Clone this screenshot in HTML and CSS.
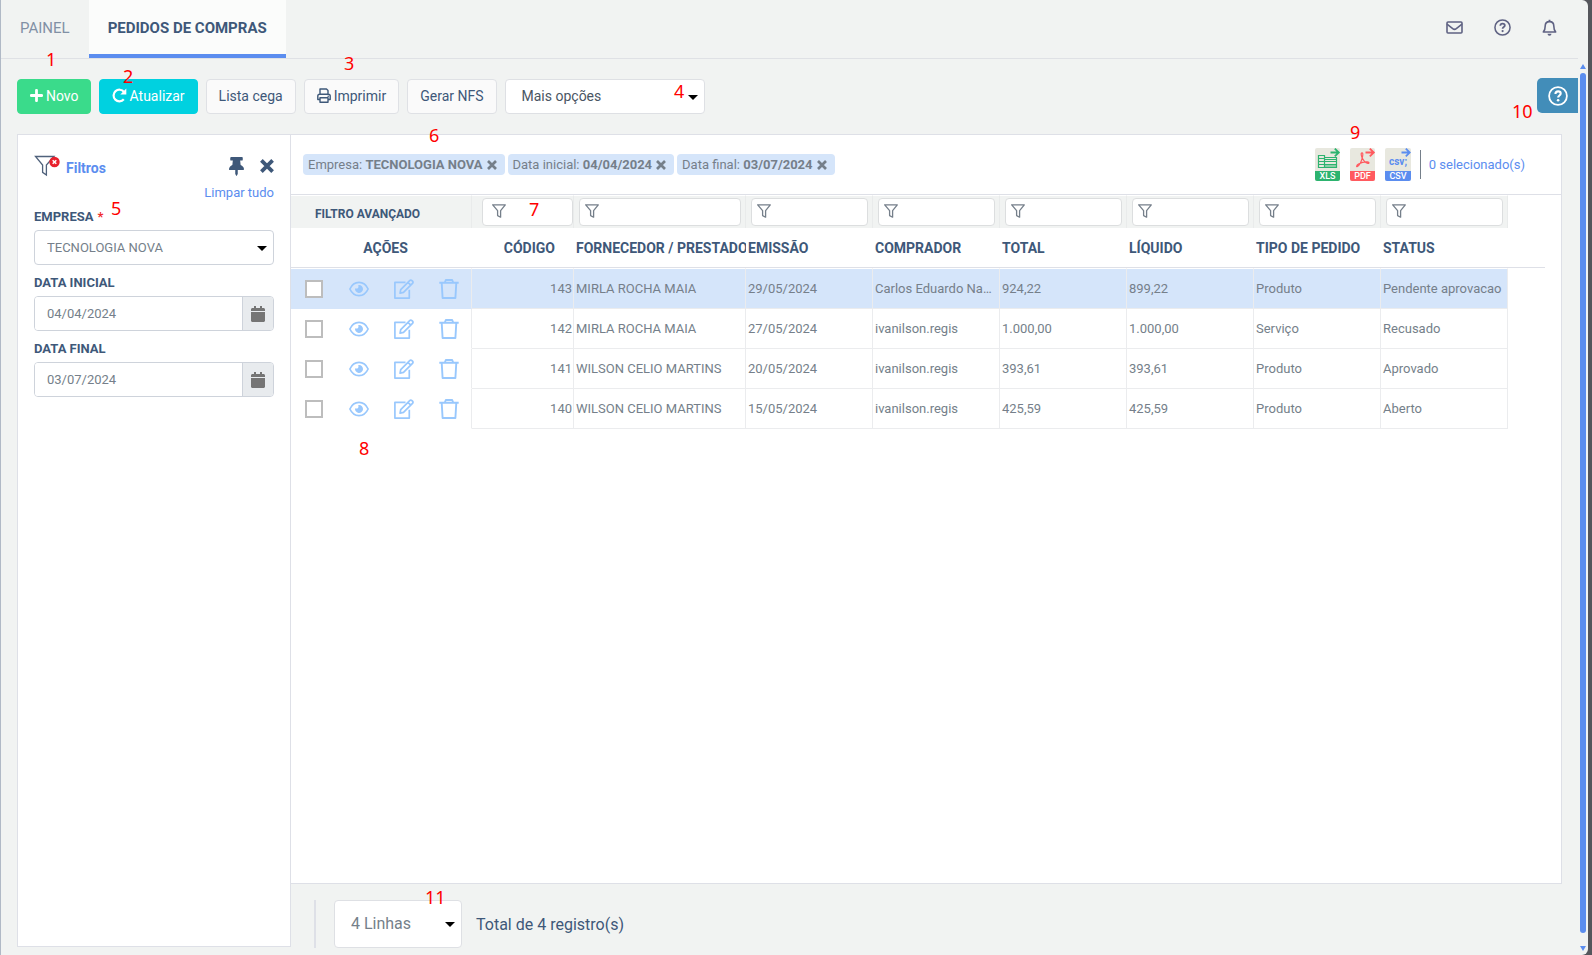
FILE: index.html
```html
<!DOCTYPE html>
<html lang="pt-BR">
<head>
<meta charset="utf-8">
<title>Pedidos de Compras</title>
<link rel="stylesheet" href="styles.css">
</head>
<body>
<svg class="sprite" aria-hidden="true">
  <symbol id="funnel" viewBox="0 0 14 14"><path d="M.7.8h12.6L8.600 6.600v6.600l-3-1.600v-5z" fill="none" stroke="currentColor" stroke-width="1.300" stroke-linejoin="round"/></symbol>
  <symbol id="cross" viewBox="0 0 12 12"><path d="M1.200 1.200l9.600 9.600M10.800 1.200l-9.600 9.600" fill="none" stroke="currentColor" stroke-width="3.200"/></symbol>
  <symbol id="help" viewBox="0 0 20 20"><circle cx="10" cy="10" r="8.900" fill="none" stroke="currentColor" stroke-width="1.800"/><path d="M7.400 8c.1-1.700 1.200-2.600 2.700-2.600s2.600.9 2.600 2.200c0 1.900-2.600 1.900-2.600 4" fill="none" stroke="currentColor" stroke-width="2.100"/><circle cx="10.100" cy="14.200" r="1.300" fill="currentColor"/></symbol>
  <symbol id="calendar" viewBox="0 0 448 512"><path fill="currentColor" d="M12 192h424c6.600 0 12 5.400 12 12v260c0 26.500-21.500 48-48 48H48c-26.500 0-48-21.500-48-48V204c0-6.600 5.400-12 12-12zm436-44v-36c0-26.500-21.500-48-48-48h-48V12c0-6.600-5.400-12-12-12h-40c-6.600 0-12 5.400-12 12v52H160V12c0-6.600-5.400-12-12-12h-40c-6.600 0-12 5.400-12 12v52H48C21.500 64 0 85.500 0 112v36c0 6.600 5.400 12 12 12h424c6.600 0 12-5.400 12-12z"/></symbol>
  <symbol id="eye" viewBox="0 0 20 20"><path d="M.9 10C2.600 6.200 6 3.400 10 3.400s7.400 2.800 9.100 6.600c-1.700 3.800-5.100 6.600-9.100 6.600S2.600 13.800.9 10z" fill="none" stroke="currentColor" stroke-width="1.700"/><path d="M10 6a4 4 0 1 1-3.900 3.200c.8.500 1.900.6 2.700 0 .9-.8.800-2.100.4-3.100z" fill="currentColor"/></symbol>
  <symbol id="edit" viewBox="0 0 20 20"><g fill="none" stroke="currentColor" stroke-width="1.700" stroke-linejoin="round"><path d="M11.500 3.300H.9v15.800h14.400v-8.400"/><path d="M6.700 10.600L15.700 1.600c.7-.7 1.500-.7 2.200 0l.6.600c.7.700.7 1.500 0 2.200l-9 9-3.400.8zM14 3.300l2.800 2.800"/></g></symbol>
  <symbol id="trash" viewBox="0 0 20 20"><g fill="none" stroke="currentColor" stroke-width="1.900" stroke-linejoin="round"><path d="M.3 3.700h19.400M5.800 3.500l1-2.500h6.400l1 2.500M2.700 3.700l.9 15.300h12.800l.9-15.300"/></g></symbol>
</svg>

<div class="app">
  <div class="view">
    <header class="topbar">
      <nav class="tabs">
        <a class="tab" href="#painel">PAINEL</a>
        <a class="tab tab-active" href="#pedidos">PEDIDOS DE COMPRAS</a>
      </nav>
      <div class="top-actions">
        <button class="icon-btn" aria-label="Mensagens"><svg width="17" height="17" viewBox="0 0 17 17"><g fill="none" stroke="currentColor" stroke-width="1.600"><rect x="1" y="3" width="15" height="11" rx="1"/><path d="M1 5.200l5.700 4.500c1.200.9 2.400.9 3.600 0L16 5.200"/></g></svg></button>
        <button class="icon-btn" aria-label="Ajuda"><svg width="17" height="17"><use href="#help"/></svg></button>
        <button class="icon-btn" aria-label="Notificações"><svg width="15" height="17" viewBox="0 0 15 17"><path d="M1.300 13c1.500-1.600 1.900-2.800 1.900-6 0-2.500 1.700-4.400 4.300-4.400s4.300 1.900 4.300 4.400c0 3.200.4 4.400 1.900 6z" fill="none" stroke="currentColor" stroke-width="1.600" stroke-linejoin="round"/><path d="M6.600.8h1.800v2H6.600zM5.500 14.700h4a2 2 0 0 1-4 0z" fill="currentColor"/></svg></button>
      </div>
    </header>

    <div class="toolbar">
      <button class="btn btn-green"><svg width="13" height="13" viewBox="0 0 13 13"><path d="M6.500 1.300v10.400M1.300 6.500h10.400" stroke="currentColor" stroke-width="2.800" stroke-linecap="round"/></svg>Novo</button>
      <button class="btn btn-cyan"><svg width="15" height="15" viewBox="0 0 15 15"><path d="M11.800 11.300A5.800 5.800 0 1 1 12 4" fill="none" stroke="currentColor" stroke-width="2.200"/><path d="M14.300.6v6H8.300z" fill="currentColor"/></svg>Atualizar</button>
      <button class="btn">Lista cega</button>
      <button class="btn"><svg width="14" height="15" viewBox="0 0 14 15"><g fill="none" stroke="currentColor" stroke-width="1.400" stroke-linejoin="round"><path d="M3 6.200V1h6.500L11 2.500v3.700M3 11.500H.8V8c0-1.200.6-1.800 1.800-1.800h8.800c1.200 0 1.800.6 1.800 1.800v3.500H11"/><path d="M3 9.800h8v4.400H3z"/></g><circle cx="11.200" cy="8.200" r=".8" fill="currentColor"/></svg>Imprimir</button>
      <button class="btn">Gerar NFS</button>
      <div class="select select-more"><select aria-label="Mais opções"><option>Mais opções</option></select></div>
    </div>
    <button class="help-tab" aria-label="Ajuda da tela"><svg width="20" height="20"><use href="#help"/></svg></button>

    <div class="workspace">
      <aside class="filters">
        <div class="filters-head">
          <svg width="26" height="22" viewBox="0 0 26 22"><path d="M1.500 1.500h18.500l-7.600 8.500v10l-3.800-2.600V10z" fill="#fff" stroke="#50627c" stroke-width="1.300"/><circle cx="20.500" cy="7" r="5.200" fill="#e8202c"/><path d="M18.700 5.200l3.600 3.600M22.300 5.200l-3.600 3.600" stroke="#fff" stroke-width="1.500"/></svg>
          <h2>Filtros</h2>
          <button class="icon-btn dark" aria-label="Fixar"><svg width="15" height="19" viewBox="0 0 384 512" preserveAspectRatio="none"><path fill="currentColor" d="M298.028 214.267L285.793 96H328c13.255 0 24-10.745 24-24V24c0-13.255-10.745-24-24-24H56C42.745 0 32 10.745 32 24v48c0 13.255 10.745 24 24 24h42.207L85.972 214.267C37.465 236.820 0 277.261 0 328c0 13.255 10.745 24 24 24h136v104.007c0 1.242.289 2.467.845 3.578l24 48c2.941 5.882 11.364 5.893 14.311 0l24-48a8.008 8.008 0 0 0 .845-3.578V352h136c13.255 0 24-10.745 24-24-.001-51.183-37.983-91.420-85.973-113.733z"/></svg></button>
          <button class="icon-btn dark" aria-label="Fechar"><svg width="14" height="14"><use href="#cross"/></svg></button>
        </div>
        <a class="clear" href="#limpar">Limpar tudo</a>
        <label class="lbl" for="empresa">EMPRESA <span class="req">*</span></label>
        <div class="select select-field"><select id="empresa"><option>TECNOLOGIA NOVA</option></select></div>
        <label class="lbl" for="dini">DATA INICIAL</label>
        <div class="date"><input id="dini" type="text" value="04/04/2024"><button aria-label="Abrir calendário inicial"><svg width="14" height="16"><use href="#calendar"/></svg></button></div>
        <label class="lbl" for="dfim">DATA FINAL</label>
        <div class="date"><input id="dfim" type="text" value="03/07/2024"><button aria-label="Abrir calendário final"><svg width="14" height="16"><use href="#calendar"/></svg></button></div>
      </aside>

      <main class="main">
        <section class="panel">
          <div class="panel-head">
            <div class="chips">
              <span class="chip">Empresa: <b>TECNOLOGIA NOVA</b><button aria-label="Remover empresa"><svg width="10" height="10"><use href="#cross"/></svg></button></span>
              <span class="chip">Data inicial: <b>04/04/2024</b><button aria-label="Remover data inicial"><svg width="10" height="10"><use href="#cross"/></svg></button></span>
              <span class="chip">Data final: <b>03/07/2024</b><button aria-label="Remover data final"><svg width="10" height="10"><use href="#cross"/></svg></button></span>
            </div>
            <div class="exports">
              <button aria-label="Exportar XLS"><svg width="26" height="33" viewBox="0 0 26 33"><rect width="25" height="33" rx="2" fill="#e8e8df"/><path d="M0 23h25v8a2 2 0 0 1-2 2H2a2 2 0 0 1-2-2z" fill="#2db36f"/><g fill="none" stroke="#2db36f"><path d="M3.500 7.500h6v12h-6zM9.500 9.500h12v10h-12M3.500 10.500h6M3.500 13.500h18M3.500 16.500h18M9.500 11.500h12M9.500 18h12" stroke-width="1.200"/><path d="M15.500 4.500h8M19.800.6l4 3.900-4 3.900" stroke-width="1.800"/></g><text x="12.500" y="31" class="ico-text">XLS</text></svg></button>
              <button aria-label="Exportar PDF"><svg width="26" height="33" viewBox="0 0 26 33"><rect width="25" height="33" rx="2" fill="#e8e8df"/><path d="M0 23h25v8a2 2 0 0 1-2 2H2a2 2 0 0 1-2-2z" fill="#ff5a5f"/><g fill="none" stroke="#ff5a5f"><path d="M12.500 5c-1.600-.5-1.700 1.600-.6 4.200 1.300 3 3.800 5.600 6 6.200 1.500.3 1.600-1.300-.4-1.500-3-.2-6.500.8-9 2.200-2.200 1.200-2.300 3.200-1.200 2.500 1.800-1.200 4.300-5.800 5.200-9.800.3-1.500.5-3.500 0-3.800z" stroke-width="1.200"/><path d="M15.500 4.500h8M19.800.6l4 3.900-4 3.900" stroke-width="1.800"/></g><text x="12.500" y="31" class="ico-text">PDF</text></svg></button>
              <button aria-label="Exportar CSV"><svg width="26" height="33" viewBox="0 0 26 33"><rect width="26" height="33" rx="2" fill="#e8e8df"/><path d="M0 23h26v8a2 2 0 0 1-2 2H2a2 2 0 0 1-2-2z" fill="#5b8def"/><path d="M16.500 4.500h8M20.800.6l4 3.900-4 3.900" fill="none" stroke="#5b8def" stroke-width="1.800"/><text x="13" y="17" class="ico-text ico-csv">csv;</text><text x="13" y="31" class="ico-text">CSV</text></svg></button>
              <span class="selected">0 selecionado(s)</span>
            </div>
          </div>

          <table class="grid">
            <colgroup><col class="c-act"><col class="c-cod"><col class="c-for"><col class="c-n"><col class="c-n"><col class="c-n"><col class="c-n"><col class="c-n"><col class="c-n"><col></colgroup>
            <thead>
              <tr class="filter-row">
                <td class="adv">FILTRO AVANÇADO</td>
                <td class="first"><label class="search"><svg width="14" height="14"><use href="#funnel"/></svg><input type="text" aria-label="Filtrar código"></label></td>
                <td><label class="search"><svg width="14" height="14"><use href="#funnel"/></svg><input type="text" aria-label="Filtrar fornecedor"></label></td>
                <td><label class="search"><svg width="14" height="14"><use href="#funnel"/></svg><input type="text" aria-label="Filtrar emissão"></label></td>
                <td><label class="search"><svg width="14" height="14"><use href="#funnel"/></svg><input type="text" aria-label="Filtrar comprador"></label></td>
                <td><label class="search"><svg width="14" height="14"><use href="#funnel"/></svg><input type="text" aria-label="Filtrar total"></label></td>
                <td><label class="search"><svg width="14" height="14"><use href="#funnel"/></svg><input type="text" aria-label="Filtrar líquido"></label></td>
                <td><label class="search"><svg width="14" height="14"><use href="#funnel"/></svg><input type="text" aria-label="Filtrar tipo"></label></td>
                <td><label class="search"><svg width="14" height="14"><use href="#funnel"/></svg><input type="text" aria-label="Filtrar status"></label></td>
                <td class="rest"></td>
              </tr>
              <tr class="head-row">
                <th class="h-act">AÇÕES</th><th class="h-cod">CÓDIGO</th><th>FORNECEDOR / PRESTADOR</th><th>EMISSÃO</th><th>COMPRADOR</th><th>TOTAL</th><th>LÍQUIDO</th><th>TIPO DE PEDIDO</th><th>STATUS</th><th></th>
              </tr>
            </thead>
            <tbody>
              <tr class="on"><td class="act"><div class="acts"><input type="checkbox" aria-label="Selecionar 143"><button aria-label="Ver"><svg width="20" height="20"><use href="#eye"/></svg></button><button aria-label="Editar"><svg width="20" height="20"><use href="#edit"/></svg></button><button aria-label="Excluir"><svg width="20" height="20"><use href="#trash"/></svg></button></div></td><td class="num">143</td><td>MIRLA ROCHA MAIA</td><td>29/05/2024</td><td>Carlos Eduardo Nascimento</td><td>924,22</td><td>899,22</td><td>Produto</td><td>Pendente aprovacao</td><td class="rest"></td></tr>
              <tr><td class="act"><div class="acts"><input type="checkbox" aria-label="Selecionar 142"><button aria-label="Ver"><svg width="20" height="20"><use href="#eye"/></svg></button><button aria-label="Editar"><svg width="20" height="20"><use href="#edit"/></svg></button><button aria-label="Excluir"><svg width="20" height="20"><use href="#trash"/></svg></button></div></td><td class="num">142</td><td>MIRLA ROCHA MAIA</td><td>27/05/2024</td><td>ivanilson.regis</td><td>1.000,00</td><td>1.000,00</td><td>Serviço</td><td>Recusado</td><td class="rest"></td></tr>
              <tr><td class="act"><div class="acts"><input type="checkbox" aria-label="Selecionar 141"><button aria-label="Ver"><svg width="20" height="20"><use href="#eye"/></svg></button><button aria-label="Editar"><svg width="20" height="20"><use href="#edit"/></svg></button><button aria-label="Excluir"><svg width="20" height="20"><use href="#trash"/></svg></button></div></td><td class="num">141</td><td>WILSON CELIO MARTINS</td><td>20/05/2024</td><td>ivanilson.regis</td><td>393,61</td><td>393,61</td><td>Produto</td><td>Aprovado</td><td class="rest"></td></tr>
              <tr><td class="act"><div class="acts"><input type="checkbox" aria-label="Selecionar 140"><button aria-label="Ver"><svg width="20" height="20"><use href="#eye"/></svg></button><button aria-label="Editar"><svg width="20" height="20"><use href="#edit"/></svg></button><button aria-label="Excluir"><svg width="20" height="20"><use href="#trash"/></svg></button></div></td><td class="num">140</td><td>WILSON CELIO MARTINS</td><td>15/05/2024</td><td>ivanilson.regis</td><td>425,59</td><td>425,59</td><td>Produto</td><td>Aberto</td><td class="rest"></td></tr>
            </tbody>
          </table>
        </section>

        <footer class="pager">
          <div class="select select-rows"><select aria-label="Linhas por página"><option>4 Linhas</option></select></div>
          <span>Total de 4 registro(s)</span>
        </footer>
      </main>
    </div>
  </div>

  <div class="scroll" aria-hidden="true">
    <svg width="6" height="5" viewBox="0 0 6 5"><path d="M3 0l3 5H0z" fill="#5b8def"/></svg>
    <div class="thumb"></div>
    <svg width="6" height="5" viewBox="0 0 6 5"><path d="M0 0h6L3 5z" fill="#5b8def"/></svg>
  </div>

  <span class="mark m1">1</span><span class="mark m2">2</span><span class="mark m3">3</span><span class="mark m4">4</span><span class="mark m5">5</span><span class="mark m6">6</span><span class="mark m7">7</span><span class="mark m8">8</span><span class="mark m9">9</span><span class="mark m10">10</span><span class="mark m11">11</span>
</div>
</body>
</html>
```

FILE: styles.css
```css
* { box-sizing: border-box; }
body { margin: 0; background: #55565c; font: 14px/20px Roboto, sans-serif; color: #3e5879; }
button, input, select { font: inherit; color: inherit; margin: 0; }
button { padding: 0; border: 0; background: none; cursor: pointer; }
svg { display: block; flex: none; }
a { text-decoration: none; color: inherit; }
.sprite { position: absolute; width: 0; height: 0; }

.app { position: relative; display: flex; min-height: 100vh; margin-right: 4px; background: #f1f3f2; border-left: 1px solid #b0b9c6; border-radius: 0 6px 6px 0; overflow: hidden; }
.view { position: relative; flex: 1; min-width: 0; display: flex; flex-direction: column; }

.topbar { display: flex; justify-content: space-between; height: 59px; border-bottom: 1px solid #dfe1e5; }
.tabs { display: flex; font-size: 15px; }
.tab { display: flex; align-items: center; padding: 0 19px 3px; height: 58px; color: #8190a5; }
.tab-active { background: #fbfcfb; border-bottom: 4px solid #5b8def; padding-top: 2px; padding-bottom: 0; font-weight: 700; color: #3e5879; }
.top-actions { display: flex; align-items: center; gap: 31px; padding: 0 21px 4px 0; color: #5f6283; }

.toolbar { display: flex; gap: 8px; padding: 20px 16px; }
.btn { display: flex; align-items: center; gap: 3px; height: 35px; padding: 0 12px 2px; border: 1px solid #dfe1e5; border-radius: 4px; background: #fafafa; white-space: nowrap; }
.btn-green { padding-right: 11px; background: #3adb8b; border-color: #3adb8b; color: #fff; }
.btn-cyan { background: #00d1e0; border-color: #00d1e0; color: #fff; }

.select { position: relative; display: flex; }
.select select { width: 100%; appearance: none; border: 1px solid #dee0e4; border-radius: 4px; background: #fff; }
.select::after { content: ""; position: absolute; right: 7px; top: 50%; margin-top: -2px; border: 5px solid transparent; border-top-color: #000; border-bottom: 0; pointer-events: none; }
.select-more { width: 200px; }
.select-more select { padding: 0 16px 2px; color: #4a5563; }
.select-field { height: 35px; }
.select-field select { padding: 0 12px; border-color: #ced3db; font-size: 13px; color: #757f8a; }
.select-rows { width: 128px; height: 48px; }
.select-rows select { padding: 0 16px; font-size: 16px; color: #757f8a; }

.help-tab { position: absolute; top: 78px; right: 0; display: flex; align-items: center; justify-content: center; width: 41px; height: 35px; border-radius: 5px 0 0 5px; background: #428db9; color: #fff; }

.workspace { flex: 1; display: flex; padding: 0 16px 8px; }
.filters { width: 274px; flex: none; padding: 16px; background: #fff; border: 1px solid #dee0e7; }
.filters-head { display: flex; align-items: center; height: 30px; }
.filters-head h2 { flex: 1; margin: 0 0 0 6px; padding-top: 4px; font-size: 14px; font-weight: 700; color: #5b8def; }
.filters-head .dark { color: #3e5879; margin-left: 16px; }
.clear { display: block; text-align: right; font-size: 13px; line-height: 24px; color: #5b8def; }
.lbl { display: flex; align-items: center; gap: 4px; height: 31px; padding-top: 4px; font-size: 13px; font-weight: 700; }
.clear + .lbl { height: 25px; padding: 0 0 2px; }
.req { color: #f02d2d; }
.date { display: flex; height: 35px; border: 1px solid #ced3db; border-radius: 4px; overflow: hidden; }
.date input { flex: 1; min-width: 0; padding: 0 12px; border: 0; font-size: 13px; color: #757f8a; }
.date button { display: flex; align-items: center; justify-content: center; width: 31px; border-left: 1px solid #ced3db; background: #e8ebee; color: #757575; }

.main { flex: 1; min-width: 0; display: flex; flex-direction: column; }
.panel { flex: 1; background: #fff; border: 1px solid #dee0e7; border-left: 0; }
.panel-head { display: flex; align-items: center; justify-content: space-between; height: 60px; padding: 0 36px 0 12px; border-bottom: 1px solid #dee0e7; }
.chips { display: flex; gap: 3px; }
.chip { display: flex; align-items: center; height: 21px; padding: 0 8px 0 5px; border-radius: 4px; background: #d5e5fa; font-size: 13px; color: #757f8a; white-space: pre; }
.chip button { margin-left: 4px; }
.exports { display: flex; align-items: center; gap: 9px; color: #5b8def; }
.selected { border-left: 1px solid #757f8a; padding-left: 8px; font-size: 13px; line-height: 29px; }
.ico-text { font: 500 9px Roboto, sans-serif; fill: #fff; text-anchor: middle; }
.ico-csv { font-size: 10px; font-weight: 700; fill: #5b8def; }

.grid { width: calc(100% - 16px); table-layout: fixed; border-collapse: separate; border-spacing: 0; font-size: 13px; color: #757f8a; }
.c-act { width: 181px; }
.c-cod { width: 102px; }
.c-for { width: 172px; }
.c-n { width: 127px; }
.grid td, .grid th { padding: 0 2px; overflow: hidden; white-space: nowrap; text-align: left; text-overflow: ellipsis; }
.grid .filter-row td { height: 33px; padding: 0 4px 0 5px; border-right: 1px solid #e9ebeb; background: #f1f3f2; border-top: 1px solid #fff; }
.grid .filter-row .adv { padding-left: 24px; padding-top: 4px; font-size: 12px; font-weight: 700; color: #3e5879; }
.grid .filter-row .first { padding: 0 0 0 10px; }
.grid .rest, .grid .filter-row .rest { background: #fff; border: 0; }
.search { display: flex; align-items: center; height: 28px; padding: 0 0 2px 5px; border: 1px solid #dcdedf; border-radius: 4px; background: #fff; color: #757f8a; }
.first .search { padding-left: 9px; }
.search input { flex: 1; min-width: 0; height: 24px; border: 0; background: none; }
.grid .head-row th { height: 40px; border-bottom: 1px solid #dee0e7; font-size: 14px; font-weight: 700; color: #3e5879; text-overflow: clip; }
.grid .head-row .h-act { text-align: center; padding-left: 10px; }
.grid .head-row .h-cod { text-align: right; padding-right: 19px; }
.grid tbody td { height: 40px; border-right: 1px solid #ebecee; border-bottom: 1px solid #ebecee; }
.grid tbody tr:first-child td { height: 41px; border-top: 1px solid #fff; }
.grid tbody .act { padding: 0; border-bottom-color: transparent; }
.grid tbody .rest, .grid tbody tr:first-child .rest { border: 0; }
.grid .on td:not(.rest) { background: #d5e5fa; }
.grid .num { text-align: right; padding-right: 1px; }
.acts { display: grid; grid-template-columns: repeat(4, 45px); justify-items: center; align-items: center; color: #99c8fd; }
.acts input { appearance: none; width: 18px; height: 18px; border: 2px solid #bdbdbd; background: #fff; }

.pager { display: flex; align-items: center; gap: 14px; height: 63px; margin-left: 23px; padding-top: 16px; font-size: 16px; }
.pager span { padding-top: 2px; }
.pager::before { content: ""; width: 2px; height: 48px; margin-right: 4px; background: #dee0e7; }

.scroll { display: flex; flex-direction: column; align-items: center; gap: 4px; width: 10px; padding: 64px 2px 4px; }
.thumb { flex: 1; width: 6px; margin-bottom: 9px; border-radius: 3px; background: #5b8def; }

.mark { position: absolute; font: 18px/18px "Noto Sans", sans-serif; color: #f00; pointer-events: none; }
.m1 { left: 45px; top: 50px; }
.m2 { left: 122px; top: 67px; }
.m3 { left: 343px; top: 54px; }
.m4 { left: 673px; top: 82px; }
.m5 { left: 110px; top: 199px; }
.m6 { left: 428px; top: 126px; }
.m7 { left: 528px; top: 200px; }
.m8 { left: 358px; top: 439px; }
.m9 { left: 1349px; top: 123px; }
.m10 { left: 1511px; top: 102px; }
.m11 { left: 424px; top: 888px; }
```
